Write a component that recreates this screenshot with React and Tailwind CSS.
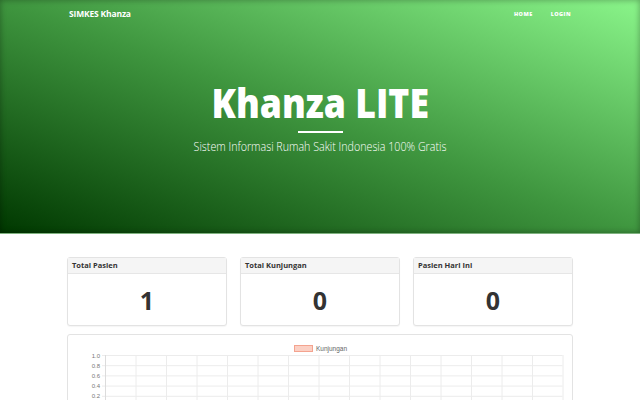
import React from 'react';

const font = { fontFamily: '"Open Sans", "Liberation Sans", sans-serif' };

const StatCard = ({ title, value }) => (
  <div className="flex-1 border border-[#e3e3e3] rounded-[3px] bg-white shadow-[0_1px_1px_rgba(0,0,0,0.04)]">
    <div className="h-[16px] px-[4px] flex items-center bg-[#f5f5f5] border-b border-[#e6e6e6] text-[7.5px] font-bold text-[#333]">
      {title}
    </div>
    <div className="h-[51px] pt-[3px] flex items-center justify-center text-[25px] font-bold text-[#333]">
      {value}
    </div>
  </div>
);

const Chart = () => {
  const x0 = 37;
  const cols = 15;
  const w = 30.5;
  const ys = [20, 30.2, 40.4, 50.6, 60.8];
  const labels = ['1.0', '0.8', '0.6', '0.4', '0.2'];
  return (
    <svg width="504" height="66" className="block">
      <rect x="226.5" y="10.5" width="18" height="6" fill="#fbd0c4" stroke="#f4a38f" />
      <text x="248" y="16" fontSize="6.5" fill="#666" fontFamily="Liberation Sans, sans-serif">Kunjungan</text>
      {ys.map((y, i) => (
        <g key={i}>
          <line x1={x0 - 3} x2={x0 + cols * w} y1={y + 0.5} y2={y + 0.5} stroke="#ececec" />
          <text x={x0 - 5} y={y + 2.5} fontSize="6" textAnchor="end" fill="#777" fontFamily="Liberation Sans, sans-serif">{labels[i]}</text>
        </g>
      ))}
      {Array.from({ length: cols + 1 }, (_, i) => (
        <line key={i} x1={x0 + i * w + 0.5} x2={x0 + i * w + 0.5} y1="20" y2="66" stroke={i === 0 ? '#dcdcdc' : '#ececec'} />
      ))}
    </svg>
  );
};

export default function App() {
  return (
    <div className="w-[640px] h-[400px] overflow-hidden bg-white" style={font}>
      <header className="relative h-[234px] bg-[linear-gradient(to_top_right,#003800_0%,#3f963f_50%,#8af58a_100%)] shadow-[inset_0_0_6px_rgba(0,0,0,0.35)] border-b border-[#7fb27f]">
        <nav className="flex items-center justify-between pl-[69px] pr-[69px] pt-[8px]">
          <span className="text-[8.5px] font-bold text-white tracking-[-0.02em]">SIMKES Khanza</span>
          <div className="flex gap-[18px] text-[5.5px] font-extrabold tracking-[0.08em] text-white">
            <span>HOME</span>
            <span>LOGIN</span>
          </div>
        </nav>
        <div className="flex flex-col items-center pt-[62px]">
          <h1 className="text-[40px] leading-none font-extrabold text-white scale-x-[0.89]">Khanza LITE</h1>
          <div className="w-[45px] h-[2px] bg-white mt-[8px]" />
          <p className="mt-[5px] text-[12px] text-white font-light scale-x-[0.89]">Sistem Informasi Rumah Sakit Indonesia 100% Gratis</p>
        </div>
      </header>
      <main className="px-[67px] pt-[23px]">
        <div className="flex gap-[13px]">
          <StatCard title="Total Pasien" value="1" />
          <StatCard title="Total Kunjungan" value="0" />
          <StatCard title="Pasien Hari Ini" value="0" />
        </div>
        <div className="mt-[8px] border border-[#e3e3e3] rounded-[3px] bg-white h-[80px]">
          <Chart />
        </div>
      </main>
    </div>
  );
}
